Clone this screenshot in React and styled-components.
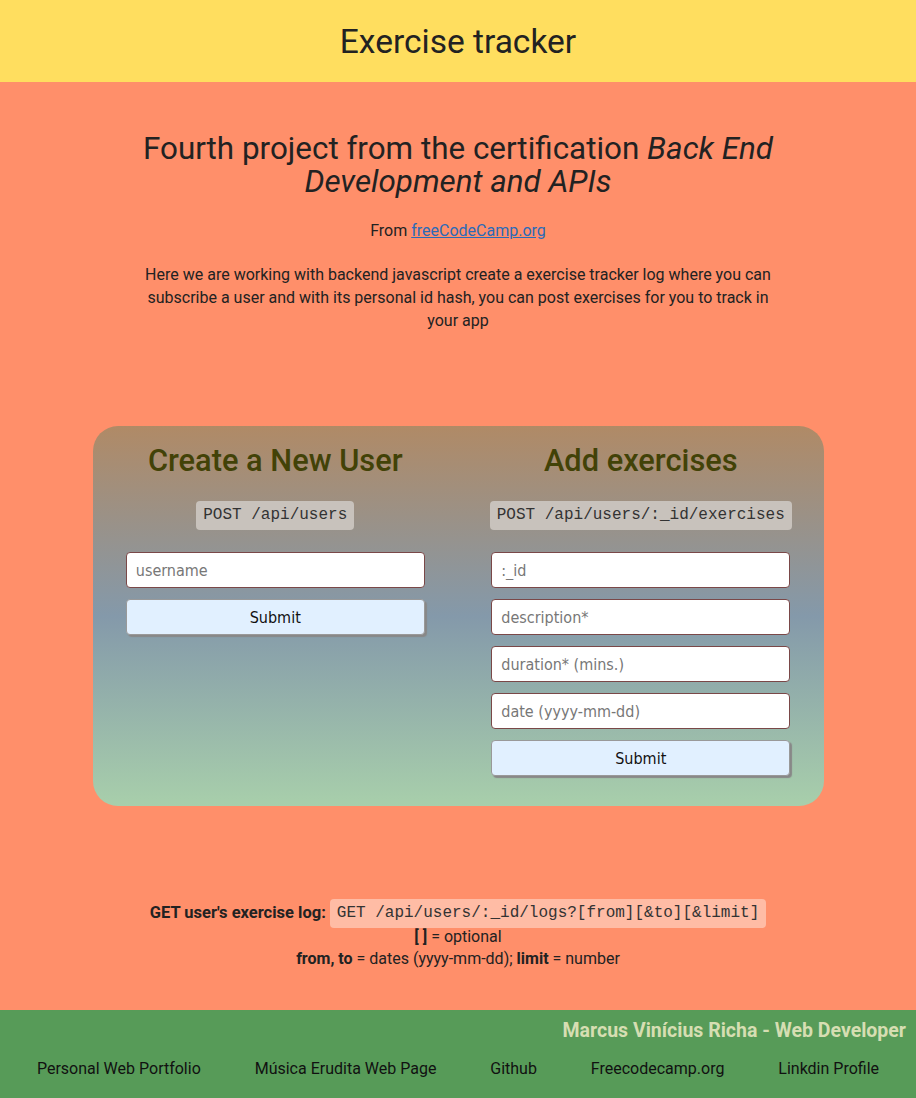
import React from 'react'
import styled, { createGlobalStyle } from 'styled-components'

const GlobalStyle = createGlobalStyle`
  html, body {
    margin: 0;
    padding: 0;
  }
  body {
    background: #ff8f6a;
    font-family: Roboto, "Liberation Sans", sans-serif;
    color: #222;
  }
`

const Header = styled.header`
  background: #ffde5f;
  height: 82px;
  display: flex;
  align-items: center;
  justify-content: center;
`

const Title = styled.h1`
  margin: 0;
  font-size: 33.5px;
  font-weight: 400;
  color: #222;
`

const Intro = styled.section`
  width: 70%;
  margin: 0 auto;
  padding-top: 50px;
  text-align: center;
`

const Subtitle = styled.h2`
  margin: 0;
  font-size: 31.4px;
  font-weight: 400;
  line-height: 33px;
`

const From = styled.p`
  margin: 21px 0 0;
  font-size: 16px;
  line-height: 23px;

  a {
    color: #2a6ab8;
  }
`

const Text = styled.p`
  margin: 21px 0 0;
  font-size: 16px;
  line-height: 23px;
`

const Card = styled.main`
  width: 731px;
  margin: 94px auto 0;
  border-radius: 25px;
  background: linear-gradient(180deg, #b08a66 0%, #8499aa 50%, #a8cfab 100%);
  display: grid;
  grid-template-columns: 1fr 1fr;
  padding: 16px 0 30px;
`

const Column = styled.form`
  display: flex;
  flex-direction: column;
  align-items: center;
`

const ColTitle = styled.h3`
  margin: 0;
  font-size: 30.8px;
  font-weight: 500;
  line-height: 38px;
  color: #424207;
`

const Code = styled.code`
  display: inline-block;
  font-family: "Liberation Mono", monospace;
  font-size: 16px;
  background: ${p => (p.$light ? 'rgba(255, 255, 255, 0.4)' : '#c8c2bc')};
  color: #333;
  border-radius: 4px;
  padding: 0 7px;
  height: 29px;
  line-height: 29px;
`

const CodeWrap = styled.div`
  margin: 21px 0 22px;
  display: flex;
`

const Input = styled.input`
  box-sizing: border-box;
  width: 299px;
  height: 36px;
  margin-bottom: 11px;
  border: 1px solid #7a4848;
  border-radius: 4px;
  background: #fff;
  padding: 0 9px;
  font-family: "DejaVu Sans Condensed", "DejaVu Sans", sans-serif;
  font-size: 16px;

  &::placeholder {
    color: #777;
  }
`

const Button = styled.button`
  box-sizing: border-box;
  width: 299px;
  height: 36px;
  border: 1px solid #999;
  border-radius: 4px;
  background: #e1f0ff;
  box-shadow: 2px 2px 1px #888;
  font-family: "DejaVu Sans Condensed", "DejaVu Sans", sans-serif;
  font-size: 16px;
  color: #111;
`

const Usage = styled.section`
  margin-top: 94px;
  text-align: center;
  font-size: 16px;
  line-height: 22px;
  padding-bottom: 40px;
`

const EndpointLine = styled.div`
  display: flex;
  justify-content: center;
  align-items: center;
  height: 26px;
`

const Line = styled.div`
  line-height: 22px;
`

const Label = styled.b`
  font-size: 16.5px;
  margin-right: 4px;
`

const Footer = styled.footer`
  background: #579b58;
  padding: 10px 10px 19px;
`

const Author = styled.div`
  text-align: right;
  font-size: 19.5px;
  font-weight: 700;
  color: #d6deb2;
  line-height: 22px;
`

const Links = styled.nav`
  display: flex;
  justify-content: space-around;
  margin-top: 17px;
`

const FooterLink = styled.a`
  color: #111;
  text-decoration: none;
  font-size: 16px;
  line-height: 20px;
`

export default function App() {
  return (
    <>
      <GlobalStyle />
      <Header>
        <Title>Exercise tracker</Title>
      </Header>
      <Intro>
        <Subtitle>
          Fourth project from the certification <i>Back End Development and APIs</i>
        </Subtitle>
        <From>
          From <a href="#">freeCodeCamp.org</a>
        </From>
        <Text>
          Here we are working with backend javascript create a exercise tracker log where you can
          subscribe a user and with its personal id hash, you can post exercises for you to track in
          your app
        </Text>
      </Intro>
      <Card>
        <Column onSubmit={e => e.preventDefault()}>
          <ColTitle>Create a New User</ColTitle>
          <CodeWrap>
            <Code>POST /api/users</Code>
          </CodeWrap>
          <Input placeholder="username" />
          <Button type="submit">Submit</Button>
        </Column>
        <Column onSubmit={e => e.preventDefault()}>
          <ColTitle>Add exercises</ColTitle>
          <CodeWrap>
            <Code>POST /api/users/:_id/exercises</Code>
          </CodeWrap>
          <Input placeholder=":_id" />
          <Input placeholder="description*" />
          <Input placeholder="duration* (mins.)" />
          <Input placeholder="date (yyyy-mm-dd)" />
          <Button type="submit">Submit</Button>
        </Column>
      </Card>
      <Usage>
        <EndpointLine>
          <Label>GET user's exercise log:</Label>
          <Code $light>GET /api/users/:_id/logs?[from][&amp;to][&amp;limit]</Code>
        </EndpointLine>
        <Line>
          <b>[ ]</b> = optional
        </Line>
        <Line>
          <b>from, to</b> = dates (yyyy-mm-dd); <b>limit</b> = number
        </Line>
      </Usage>
      <Footer>
        <Author>Marcus Vinícius Richa - Web Developer</Author>
        <Links>
          <FooterLink href="#">Personal Web Portfolio</FooterLink>
          <FooterLink href="#">Música Erudita Web Page</FooterLink>
          <FooterLink href="#">Github</FooterLink>
          <FooterLink href="#">Freecodecamp.org</FooterLink>
          <FooterLink href="#">Linkdin Profile</FooterLink>
        </Links>
      </Footer>
    </>
  )
}
